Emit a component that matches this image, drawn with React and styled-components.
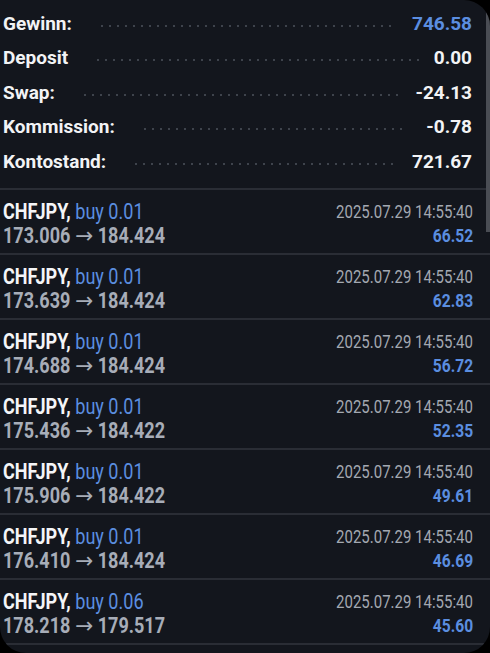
import styled, { createGlobalStyle } from "styled-components";

const GlobalStyle = createGlobalStyle`
  html, body {
    margin: 0;
    padding: 0;
    background: #000;
  }
  body {
    font-family: Roboto, "Liberation Sans", sans-serif;
  }
`;

const Screen = styled.div`
  position: relative;
  width: 490px;
  height: 653px;
  overflow: hidden;
  background: #13161d;
  border-radius: 0 26px 26px 26px;
`;

const Scrollbar = styled.div`
  position: absolute;
  right: 0;
  top: 12px;
  width: 4px;
  height: 220px;
  background: #4a4d54;
`;

const Summary = styled.div`
  padding: 6px 18px 9px 3px;
  border-bottom: 2px solid #2a2d35;
`;

const SumRow = styled.div`
  display: flex;
  align-items: center;
  height: 34.5px;
  font-size: 19px;
  font-weight: 700;
  color: #f2f3f5;
`;

const Leader = styled.div`
  flex: 1;
  height: 4px;
  margin: 5px ${(p) => p.$right}px 0 ${(p) => p.$left}px;
  background-image: radial-gradient(circle, #3e434c 1.2px, transparent 1.5px);
  background-size: 8px 4px;
  background-repeat: repeat-x;
`;

const SumValue = styled.span`
  color: ${(p) => (p.$blue ? "#5b8ee0" : "#f2f3f5")};
`;

const Trade = styled.div`
  display: flex;
  justify-content: space-between;
  height: 63px;
  padding: 0 17px 0 3px;
  border-bottom: 2px solid #2a2d35;
`;

const Col = styled.div`
  display: flex;
  flex-direction: column;
  align-items: ${(p) => (p.$end ? "flex-end" : "flex-start")};
  padding-top: ${(p) => (p.$end ? 11 : 10)}px;
`;

// condensed look: the app uses a narrow face, squeeze Roboto horizontally
const Narrow = styled.div`
  white-space: nowrap;
  transform: scaleX(${(p) => p.$scale || 0.84});
  transform-origin: ${(p) => (p.$end ? "right" : "left")} center;
`;

const Symbol = styled(Narrow)`
  font-size: 22px;
  font-weight: 700;
  color: #f4f5f7;
  line-height: 24px;
  span {
    font-weight: 400;
    color: #5b8ee0;
  }
`;

const Prices = styled(Narrow)`
  font-size: 22px;
  font-weight: 700;
  color: #a7adb8;
  line-height: 23px;
`;

const Arrow = styled.span`
  display: inline-block;
  font-family: "DejaVu Sans", sans-serif;
  font-size: 22px;
  font-weight: 400;
  margin: 0 2px;
  transform: scaleX(1.2);
`;

const Time = styled(Narrow)`
  font-size: 18.5px;
  color: #a3a8b1;
  line-height: 22px;
`;

const Profit = styled(Narrow)`
  font-size: 19px;
  font-weight: 700;
  color: #5b8ee0;
  line-height: 26px;
`;

const summary = [
  { label: "Gewinn:", value: "746.58", blue: true, left: 26, right: 18 },
  { label: "Deposit", value: "0.00", left: 26, right: 15 },
  { label: "Swap:", value: "-24.13", left: 26, right: 16 },
  { label: "Kommission:", value: "-0.78", left: 26, right: 18 },
  { label: "Kontostand:", value: "721.67", left: 26, right: 16 },
];

const trades = [
  { lot: "0.01", open: "173.006", close: "184.424", profit: "66.52" },
  { lot: "0.01", open: "173.639", close: "184.424", profit: "62.83" },
  { lot: "0.01", open: "174.688", close: "184.424", profit: "56.72" },
  { lot: "0.01", open: "175.436", close: "184.422", profit: "52.35" },
  { lot: "0.01", open: "175.906", close: "184.422", profit: "49.61" },
  { lot: "0.01", open: "176.410", close: "184.424", profit: "46.69" },
  { lot: "0.06", open: "178.218", close: "179.517", profit: "45.60" },
];

const App = () => {
  return (
    <>
      <GlobalStyle />
      <Screen>
        <Summary>
          {summary.map((s) => (
            <SumRow key={s.label}>
              <span>{s.label}</span>
              <Leader $left={s.left} $right={s.right} />
              <SumValue $blue={s.blue}>{s.value}</SumValue>
            </SumRow>
          ))}
        </Summary>
        {trades.map((t, i) => (
          <Trade key={i}>
            <Col>
              <Symbol $scale={0.82}>
                CHFJPY, <span>buy {t.lot}</span>
              </Symbol>
              <Prices $scale={0.82}>
                {t.open} <Arrow>→</Arrow> {t.close}
              </Prices>
            </Col>
            <Col $end>
              <Time $end $scale={0.81}>2025.07.29 14:55:40</Time>
              <Profit $end $scale={0.82}>{t.profit}</Profit>
            </Col>
          </Trade>
        ))}
        <Scrollbar />
      </Screen>
    </>
  );
};

export default App;
